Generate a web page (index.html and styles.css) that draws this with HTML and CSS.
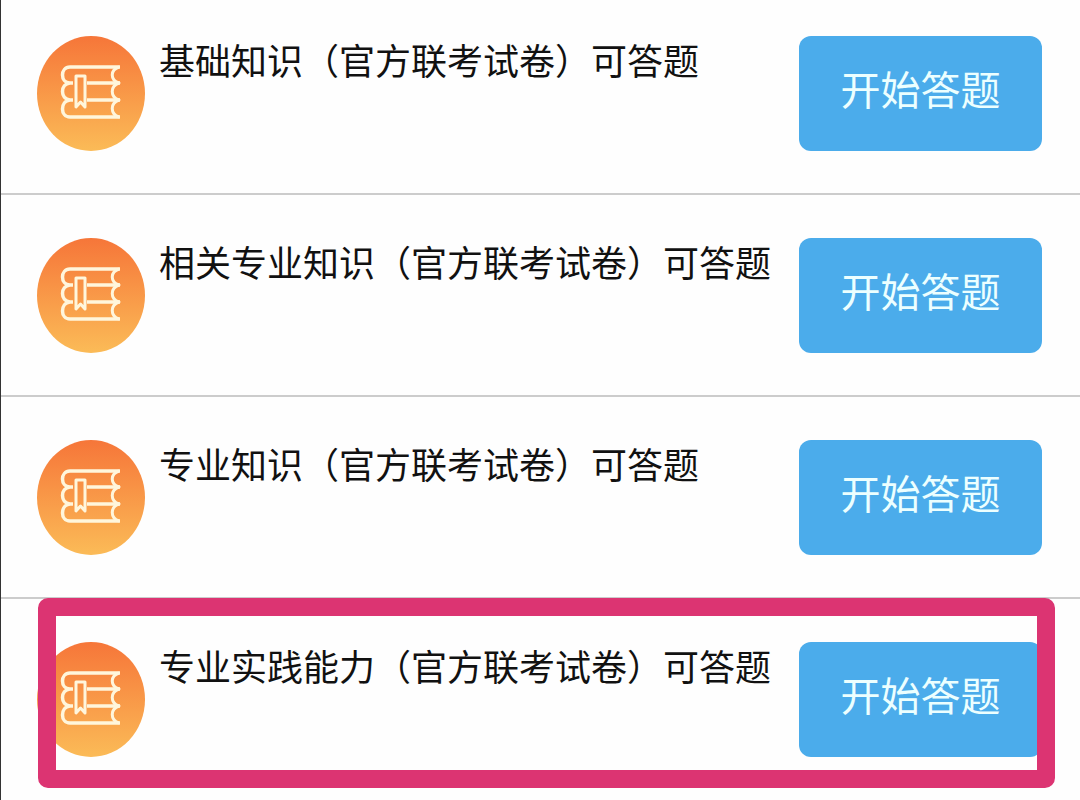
FILE: index.html
```html
<!DOCTYPE html>
<html lang="zh-CN">
<head>
	<meta charset="UTF-8">
	<meta name="viewport" content="width=device-width, initial-scale=1.0">
	<title>官方联考试卷</title>
	<link rel="stylesheet" href="styles.css">
</head>
<body>
	<svg class="sprite" aria-hidden="true">
		<linearGradient id="orange" x1="0" y1="0" x2="0" y2="1">
			<stop offset="0" stop-color="#f67639"/>
			<stop offset="1" stop-color="#fbbb57"/>
		</linearGradient>
		<symbol id="books" viewBox="0 0 108 115" preserveAspectRatio="none">
			<ellipse cx="54" cy="57.5" rx="54" ry="57.5" fill="url(#orange)"/>
			<g fill="none" stroke="#fff6dc" stroke-width="3.5" stroke-linejoin="round">
				<path d="M83 31H33C23 31 23 47 33 47H36M50 47H83M33 47C23 48 23 63 33 64H36M50 64H83M33 64C23 65 23 81 33 81H83"/>
				<path d="M82 31C73 34 73 44 82 47C73 50 73 61 82 64C73 67 73 78 82 81" stroke-width="3"/>
				<path d="M39 40H48V71L43.500 66L39 71Z" stroke-width="3"/>
			</g>
		</symbol>
	</svg>
	<ul class="paper-list">
		<li class="paper">
			<svg class="paper__icon" aria-hidden="true"><use href="#books"/></svg>
			<h2 class="paper__title">基础知识（官方联考试卷）可答题</h2>
			<button class="paper__btn" type="button">开始答题</button>
		</li>
		<li class="paper">
			<svg class="paper__icon" aria-hidden="true"><use href="#books"/></svg>
			<h2 class="paper__title">相关专业知识（官方联考试卷）可答题</h2>
			<button class="paper__btn" type="button">开始答题</button>
		</li>
		<li class="paper">
			<svg class="paper__icon" aria-hidden="true"><use href="#books"/></svg>
			<h2 class="paper__title">专业知识（官方联考试卷）可答题</h2>
			<button class="paper__btn" type="button">开始答题</button>
		</li>
		<li class="paper paper--marked">
			<svg class="paper__icon" aria-hidden="true"><use href="#books"/></svg>
			<h2 class="paper__title">专业实践能力（官方联考试卷）可答题</h2>
			<button class="paper__btn" type="button">开始答题</button>
		</li>
	</ul>
</body>
</html>
```
FILE: styles.css
```css
*{
	margin: 0;
	padding: 0;
	box-sizing: border-box;
}
body{
	min-height: 100vh;
	border-left: 1px solid #333;
	background-color: #fefefe;
	font-family: "Noto Sans CJK SC", sans-serif;
}

.sprite{
	position: absolute;
	width: 0;
	height: 0;
}

.paper-list{
	list-style: none;
}

.paper{
	position: relative;
	display: flex;
	align-items: flex-start;
	padding: 43px 38px 42px 36px;
	border-bottom: 2px solid #ccc;
}
.paper:first-child{
	padding-top: 36px;
}
.paper:last-child{
	border-bottom: none;
}

.paper__icon{
	flex: none;
	width: 108px;
	height: 115px;
}

.paper__title{
	flex: 1;
	margin-left: 14px;
	font-size: 36px;
	font-weight: 400;
	line-height: 46px;
	color: #111;
}

.paper__btn{
	flex: none;
	width: 243px;
	height: 115px;
	padding-bottom: 12px;
	border: none;
	border-radius: 12px;
	background-color: #4baceb;
	color: #ecffff;
	font-family: inherit;
	font-size: 40px;
	font-weight: 400;
}

/* highlight frame over the row */
.paper--marked::after{
	content: "";
	position: absolute;
	top: -1px;
	right: 25px;
	bottom: 11px;
	left: 37px;
	border: 18px solid #dc3472;
	border-radius: 10px;
	pointer-events: none;
}
```
